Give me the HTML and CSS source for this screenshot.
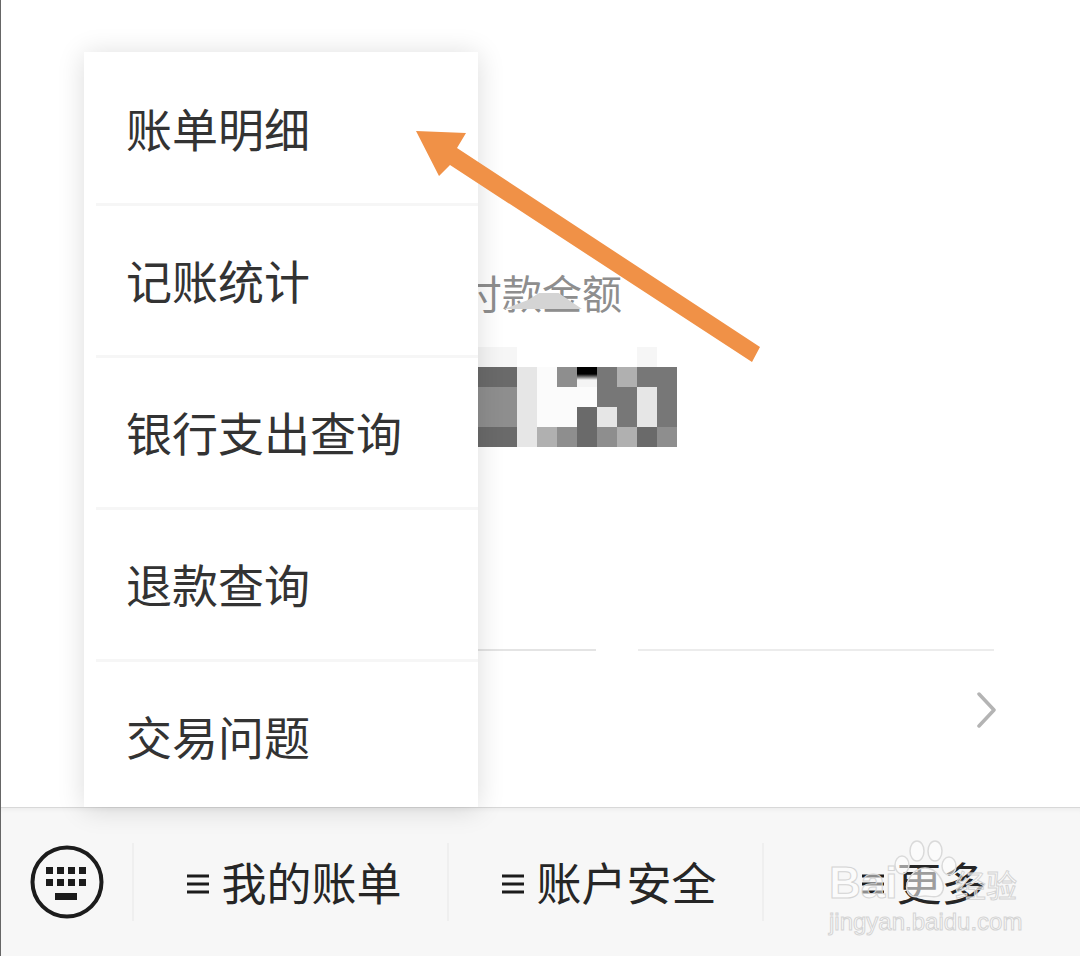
FILE: index.html
```html
<!DOCTYPE html>
<html lang="zh-CN">
<head>
    <meta charset="UTF-8">
    <title>账单明细</title>
    <link rel="stylesheet" href="styles.css">
</head>
<body>
    <div class="page">
        <div class="content">
            <p class="pay-title">付款金额<span class="smudge"></span></p>
            <div class="amount">
                <span class="s8"></span><span class="s8"></span><span></span><span></span><span></span><span></span><span></span><span></span><span class="s8"></span><span></span>
                <span class="s2"></span><span class="s2"></span><span class="s6"></span><span class="s7"></span><span class="s4"></span><span class="s0"></span><span class="s3"></span><span class="s5"></span><span class="s3"></span><span class="s3"></span>
                <span class="s4"></span><span class="s4"></span><span class="s6"></span><span class="s7"></span><span class="s7"></span><span class="s7"></span><span class="s3"></span><span class="s3"></span><span class="s6"></span><span class="s3"></span>
                <span class="s4"></span><span class="s4"></span><span class="s6"></span><span class="s7"></span><span class="s7"></span><span class="s2"></span><span class="s6"></span><span class="s3"></span><span class="s6"></span><span class="s3"></span>
                <span class="s2"></span><span class="s2"></span><span class="s6"></span><span class="s5"></span><span class="s4"></span><span class="s2"></span><span class="s4"></span><span class="s5"></span><span class="s2"></span><span class="s4"></span>
            </div>
            <div class="divider"></div>
            <div class="detail-row">
                <svg class="chevron" width="20" height="36" viewBox="0 0 20 36"><path d="M2 2 L17 18 L2 34" fill="none" stroke="#b4b4b4" stroke-width="3.5" stroke-linecap="round" stroke-linejoin="round"/></svg>
            </div>
        </div>

        <div class="popup-menu">
            <a class="menu-item">账单明细</a>
            <a class="menu-item">记账统计</a>
            <a class="menu-item">银行支出查询</a>
            <a class="menu-item">退款查询</a>
            <a class="menu-item">交易问题</a>
        </div>

        <div class="bottom-bar">
            <div class="keyboard-btn">
                <svg width="76" height="76" viewBox="0 0 76 76">
                    <circle cx="38" cy="38" r="34.5" fill="none" stroke="#1c1c1c" stroke-width="4"/>
                    <g fill="#1c1c1c">
                        <rect x="17" y="23" width="7" height="7"/><rect x="28" y="23" width="7" height="7"/><rect x="39" y="23" width="7" height="7"/><rect x="50" y="23" width="7" height="7"/>
                        <rect x="17" y="35" width="7" height="7"/><rect x="28" y="35" width="7" height="7"/><rect x="39" y="35" width="7" height="7"/><rect x="50" y="35" width="7" height="7"/>
                        <rect x="26" y="49" width="22" height="7"/>
                    </g>
                </svg>
            </div>
            <div class="tab"><svg class="bars" width="22" height="22" viewBox="0 0 22 22"><path d="M0 3H22M0 11H22M0 19H22" stroke="#1c1c1c" stroke-width="3"/></svg>我的账单</div>
            <div class="tab"><svg class="bars" width="22" height="22" viewBox="0 0 22 22"><path d="M0 3H22M0 11H22M0 19H22" stroke="#1c1c1c" stroke-width="3"/></svg>账户安全</div>
            <div class="tab"><svg class="bars" width="22" height="22" viewBox="0 0 22 22"><path d="M0 3H22M0 11H22M0 19H22" stroke="#1c1c1c" stroke-width="3"/></svg>更多</div>
        </div>

        <!-- annotation arrow drawn on top of the screenshot -->
        <svg class="arrow" width="1080" height="956" viewBox="0 0 1080 956"><polygon points="416,131 466,133 457,148 760,347 752,362 450,165 439,176" fill="#f09147"/></svg>

        <div class="watermark">
            <svg class="paw" width="66" height="62" viewBox="0 0 66 62">
                <g fill="rgba(255,255,255,.55)" stroke="#dadada" stroke-width="1.5">
                    <ellipse cx="9" cy="25" rx="7" ry="9"/><ellipse cx="24" cy="11" rx="7" ry="10"/><ellipse cx="42" cy="11" rx="7" ry="10"/><ellipse cx="56" cy="26" rx="7" ry="9"/>
                    <path d="M32 28 C44 28 52 42 50 50 C47 60 38 56 32 56 C26 56 17 60 14 50 C12 42 20 28 32 28Z"/>
                </g>
            </svg>
            <span class="wm-bai">Bai</span>
            <span class="wm-jy">经验</span>
            <span class="wm-url">jingyan.baidu.com</span>
        </div>
    </div>
</body>
</html>
```

FILE: styles.css
```css
* {
    box-sizing: border-box;
}
body {
    margin: 0;
    background-color: #fff;
    font-family: "Noto Sans CJK SC", "Noto Sans", sans-serif;
}
.page {
    position: relative;
    display: flex;
    flex-direction: column;
    width: 1080px;
    height: 956px;
    overflow: hidden;
    border-left: 1px solid #666;
}
.content {
    height: 807px;
    padding-top: 266px;
}
.pay-title {
    position: relative;
    width: 160px;
    margin: 0 0 0 461px;
    font-size: 40px;
    line-height: 52px;
    color: #8e8e8e;
    white-space: nowrap;
}
.smudge {
    position: absolute;
    left: 42px;
    top: 27px;
    width: 78px;
    height: 16px;
    background-color: #d4d4d4;
    clip-path: polygon(0 100%, 30% 45%, 45% 0, 70% 0, 100% 100%);
}
.amount {
    display: grid;
    grid-template-columns: repeat(10, 20px);
    grid-auto-rows: 20px;
    margin: 29px 0 0 476px;
}
.s0 { background: linear-gradient(#000 0 35%, #f4f4f4 65%); }
.s2 { background-color: #6a6a6a; }
.s3 { background-color: #777; }
.s4 { background-color: #8e8e8e; }
.s5 { background-color: #b0b0b0; }
.s6 { background-color: #e6e6e6; }
.s7 { background-color: #fbfbfb; }
.s8 { background-color: #f6f6f6; }
.divider {
    width: 516px;
    height: 2px;
    margin: 202px 0 0 477px;
    background: linear-gradient(to right, #e4e4e4 0 118px, #fff 118px 160px, #ececec 160px);
}
.detail-row {
    display: flex;
    justify-content: flex-end;
    padding: 41px 83px 0 0;
}
.popup-menu {
    position: absolute;
    left: 83px;
    top: 52px;
    width: 394px;
    height: 755px;
    padding-top: 2px;
    background-color: #fff;
    box-shadow: 0 2px 26px rgba(0,0,0,0.14);
    z-index: 2;
}
.menu-item {
    display: block;
    height: 152px;
    margin-left: 12px;
    padding: 41px 0 0 30px;
    font-size: 46px;
    line-height: 64px;
    color: #333;
    border-bottom: 3px solid #f6f6f6;
}
.menu-item:last-child {
    border-bottom: none;
}
.bottom-bar {
    display: flex;
    align-items: center;
    flex: 1;
    background-color: #f7f7f7;
    border-top: 1px solid #d8d8d8;
    box-shadow: inset 0 6px 6px -6px rgba(0,0,0,0.08);
}
.keyboard-btn {
    display: flex;
    justify-content: center;
    width: 131px;
}
.keyboard-btn svg {
    display: block;
}
.tab {
    display: flex;
    align-items: center;
    justify-content: center;
    gap: 12px;
    width: 315px;
    height: 78px;
    padding-left: 8px;
    font-size: 45px;
    line-height: 78px;
    color: #262626;
    border-left: 2px solid #efefef;
}
.bars {
    flex: none;
    margin-top: 4px;
}
.arrow {
    position: absolute;
    left: -1px;
    top: 0;
    z-index: 3;
    pointer-events: none;
}
.watermark {
    position: absolute;
    left: 827px;
    top: 838px;
    width: 200px;
    height: 96px;
    z-index: 4;
}
.paw {
    position: absolute;
    left: 65px;
    top: 2px;
}
.wm-bai, .wm-jy, .wm-url {
    position: absolute;
    color: rgba(255,255,255,0.5);
    -webkit-text-stroke: 1px #d4d4d4;
    white-space: nowrap;
}
.wm-bai {
    left: 1px;
    top: 20px;
    font-family: "Liberation Sans", sans-serif;
    font-size: 44px;
    font-weight: bold;
    line-height: 50px;
}
.wm-jy {
    left: 127px;
    top: 24px;
    font-size: 31px;
    line-height: 44px;
}
.wm-url {
    left: 1px;
    top: 69px;
    font-family: "Liberation Sans", sans-serif;
    font-size: 24px;
    line-height: 30px;
}
```
